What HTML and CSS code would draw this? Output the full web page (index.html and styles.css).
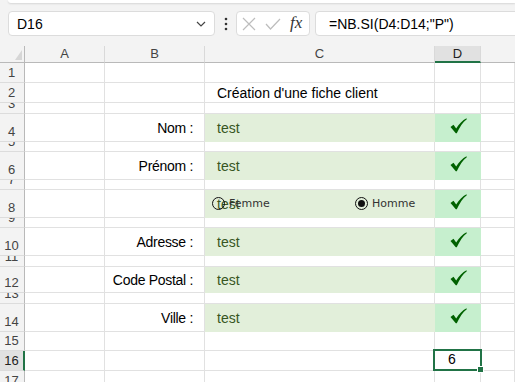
FILE: index.html
```html
<!DOCTYPE html>
<html>
  <head>
    <meta charset="utf-8">
    <title>Fiche client</title>
    <link rel="stylesheet" href="styles.css">
  </head>
  <body>
    <div class="top_edge"></div>

    <div class="formula_bar">
      <div class="name_box">
        <span>D16</span>
        <svg class="chevron" width="10" height="6" viewBox="0 0 10 6"><path d="M1 1 L5 5 L9 1" fill="none" stroke="#444" stroke-width="1.2"/></svg>
      </div>
      <svg class="dots" width="4" height="14" viewBox="0 0 4 14"><circle cx="2" cy="2" r="1.3" fill="#333"/><circle cx="2" cy="7" r="1.3" fill="#333"/><circle cx="2" cy="12" r="1.3" fill="#333"/></svg>
      <div class="fx_box">
        <svg width="14" height="14" viewBox="0 0 14 14"><path d="M1 1 L13 13 M13 1 L1 13" stroke="#bdbdbd" stroke-width="1.2"/></svg>
        <svg width="16" height="12" viewBox="0 0 16 12"><path d="M1 6 L5.5 11 L15 1" fill="none" stroke="#bdbdbd" stroke-width="1.2"/></svg>
        <span class="fx">fx</span>
      </div>
      <div class="formula">=NB.SI(D4:D14;"P")</div>
    </div>

    <div class="sheet">
      <!-- column headers -->
      <div class="corner"><div class="corner_tri"></div></div>
      <div class="ch">A</div><div class="ch">B</div><div class="ch">C</div><div class="ch ch_sel">D</div><div class="ch ch_last"></div>

      <div class="rh">1</div><div class="c"></div><div class="c"></div><div class="c"></div><div class="c"></div><div class="c"></div>
      <div class="rh">2</div><div class="c"></div><div class="c"></div><div class="c val">Création d'une fiche client</div><div class="c"></div><div class="c"></div>
      <div class="rh">3</div><div class="c"></div><div class="c"></div><div class="c"></div><div class="c"></div><div class="c"></div>

      <div class="rh">4</div><div class="c"></div><div class="c label">Nom :</div><div class="c field">test</div><div class="c ok"><svg class="check" width="17" height="16" viewBox="0 0 17 16"><path d="M0.5 9 L3.5 6.8 L6.2 10.6 C9 6 12.5 2.2 16.5 0.3 L16.8 1.2 C12.8 4.2 9.6 9 6.8 15.3 L5.8 15.3 Z" fill="#006100"/></svg></div><div class="c"></div>
      <div class="rh">5</div><div class="c"></div><div class="c"></div><div class="c"></div><div class="c"></div><div class="c"></div>

      <div class="rh">6</div><div class="c"></div><div class="c label">Prénom :</div><div class="c field">test</div><div class="c ok"><svg class="check" width="17" height="16" viewBox="0 0 17 16"><path d="M0.5 9 L3.5 6.8 L6.2 10.6 C9 6 12.5 2.2 16.5 0.3 L16.8 1.2 C12.8 4.2 9.6 9 6.8 15.3 L5.8 15.3 Z" fill="#006100"/></svg></div><div class="c"></div>
      <div class="rh">7</div><div class="c"></div><div class="c"></div><div class="c"></div><div class="c"></div><div class="c"></div>

      <div class="rh">8</div><div class="c"></div><div class="c"></div>
      <div class="c field radios">test
        <label class="radio femme"><span class="dot"></span>Femme</label>
        <label class="radio homme"><span class="dot dot_on"></span>Homme</label>
      </div>
      <div class="c ok"><svg class="check" width="17" height="16" viewBox="0 0 17 16"><path d="M0.5 9 L3.5 6.8 L6.2 10.6 C9 6 12.5 2.2 16.5 0.3 L16.8 1.2 C12.8 4.2 9.6 9 6.8 15.3 L5.8 15.3 Z" fill="#006100"/></svg></div><div class="c"></div>
      <div class="rh">9</div><div class="c"></div><div class="c"></div><div class="c"></div><div class="c"></div><div class="c"></div>

      <div class="rh">10</div><div class="c"></div><div class="c label">Adresse :</div><div class="c field">test</div><div class="c ok"><svg class="check" width="17" height="16" viewBox="0 0 17 16"><path d="M0.5 9 L3.5 6.8 L6.2 10.6 C9 6 12.5 2.2 16.5 0.3 L16.8 1.2 C12.8 4.2 9.6 9 6.8 15.3 L5.8 15.3 Z" fill="#006100"/></svg></div><div class="c"></div>
      <div class="rh">11</div><div class="c"></div><div class="c"></div><div class="c"></div><div class="c"></div><div class="c"></div>

      <div class="rh">12</div><div class="c"></div><div class="c label">Code Postal :</div><div class="c field">test</div><div class="c ok"><svg class="check" width="17" height="16" viewBox="0 0 17 16"><path d="M0.5 9 L3.5 6.8 L6.2 10.6 C9 6 12.5 2.2 16.5 0.3 L16.8 1.2 C12.8 4.2 9.6 9 6.8 15.3 L5.8 15.3 Z" fill="#006100"/></svg></div><div class="c"></div>
      <div class="rh">13</div><div class="c"></div><div class="c"></div><div class="c"></div><div class="c"></div><div class="c"></div>

      <div class="rh">14</div><div class="c"></div><div class="c label">Ville :</div><div class="c field">test</div><div class="c ok"><svg class="check" width="17" height="16" viewBox="0 0 17 16"><path d="M0.5 9 L3.5 6.8 L6.2 10.6 C9 6 12.5 2.2 16.5 0.3 L16.8 1.2 C12.8 4.2 9.6 9 6.8 15.3 L5.8 15.3 Z" fill="#006100"/></svg></div><div class="c"></div>
      <div class="rh">15</div><div class="c"></div><div class="c"></div><div class="c"></div><div class="c"></div><div class="c"></div>

      <div class="rh rh_sel">16</div><div class="c"></div><div class="c"></div><div class="c"></div><div class="c total"><span>6</span><div class="selection"><div class="handle"></div></div></div><div class="c"></div>
      <div class="rh">17</div><div class="c"></div><div class="c"></div><div class="c"></div><div class="c"></div><div class="c"></div>
    </div>
  </body>
</html>
```

FILE: styles.css
```css
html, body{
  margin: 0;
  padding: 0;
}
body{
  width: 515px;
  height: 382px;
  overflow: hidden;
  background: #f3f3f3;
  font-family: "Liberation Sans", Arial, sans-serif;
  color: #000;
}

/* ribbon bottom + formula bar */
.top_edge{
  height: 3px;
  margin-left: 8px;
  background: #fff;
  border-bottom-left-radius: 6px;
  box-shadow: 0 1px 2px rgba(0,0,0,0.12);
}
.formula_bar{
  display: flex;
  align-items: center;
  height: 25px;
  margin-top: 8px;
  margin-bottom: 10px;
  padding-left: 8px;
}
.name_box{
  box-sizing: border-box;
  width: 207px;
  height: 25px;
  display: flex;
  align-items: center;
  justify-content: space-between;
  padding: 0 8px 0 8px;
  background: #fff;
  border: 1px solid #dcdcdc;
  border-radius: 4px;
  font-size: 14px;
}
.chevron{
  margin-top: 1px;
}
.dots{
  margin: 0 8px 0 9px;
}
.fx_box{
  box-sizing: border-box;
  width: 74px;
  height: 25px;
  display: flex;
  align-items: center;
  gap: 9px;
  padding-left: 5px;
  background: #fff;
  border: 1px solid #dcdcdc;
  border-radius: 4px;
}
.fx{
  font-family: "Liberation Serif", "Times New Roman", serif;
  font-style: italic;
  font-size: 17px;
  color: #333;
  margin-top: -2px;
}
.formula{
  box-sizing: border-box;
  flex: 1;
  height: 25px;
  margin-left: 5px;
  margin-right: -10px;
  padding-left: 13px;
  display: flex;
  align-items: center;
  background: #fff;
  border: 1px solid #dcdcdc;
  border-radius: 4px;
  font-size: 14px;
}

/* sheet grid */
.sheet{
  display: grid;
  grid-template-columns: 25px 80px 100px 230px 46px 1fr;
  grid-template-rows: 17px 20px 20px 11px 28px 10px 28px 10px 28px 10px 28px 11px 26px 11px 28px 19px 20px 20px;
  background: #fff;
  font-size: 14px;
}
.sheet > div{
  box-sizing: border-box;
  overflow: hidden;
}
.corner{
  background: #f3f3f3;
  border-right: 1px solid #b9b9b9;
  border-bottom: 1px solid #b9b9b9;
  position: relative;
}
.corner_tri{
  position: absolute;
  right: 2px;
  bottom: 2px;
  width: 0;
  height: 0;
  border-left: 7px solid transparent;
  border-bottom: 10px solid #d6d6d6;
}
.ch{
  background: #f3f3f3;
  border-right: 1px solid #d9d9d9;
  border-bottom: 1px solid #b9b9b9;
  text-align: center;
  font-size: 13px;
  line-height: 16px;
  color: #444;
}
.ch_sel{
  background: #e1e1e1;
  border-bottom: 2px solid #217346;
  color: #222;
}
.ch_last{
  border-right: none;
}
.rh{
  background: #f3f3f3;
  border-right: 1px solid #b9b9b9;
  border-bottom: 1px solid #dcdcdc;
  display: flex;
  align-items: flex-end;
  justify-content: center;
  padding-bottom: 3px;
  padding-right: 1px;
  font-size: 13px;
  line-height: 13px;
  color: #444;
}
.rh_sel{
  background: #e1e1e1;
  border-right: 2px solid #217346;
  padding-right: 0;
  color: #222;
}
.c{
  border-right: 1px solid #e1e1e1;
  border-bottom: 1px solid #e1e1e1;
  display: flex;
  align-items: center;
}
.val{
  padding-left: 12px;
}
.label{
  justify-content: flex-end;
  padding-right: 11px;
  letter-spacing: -0.3px;
}
.field{
  background: #e2efda;
  border-color: #e2efda;
  padding-left: 12px;
  color: #375623;
}
.ok{
  background: #c6efce;
  border-color: #c6efce;
  justify-content: center;
}
.check{
  margin-bottom: 3px;
  margin-left: 1px;
}

/* option buttons drawn over C8 */
.radios{
  position: relative;
}
.radio{
  position: absolute;
  top: 7px;
  display: flex;
  align-items: center;
  font-family: "DejaVu Sans", Tahoma, sans-serif;
  font-size: 11px;
  color: #333;
}
.femme{
  left: 7px;
}
.homme{
  left: 150px;
}
.dot{
  box-sizing: border-box;
  width: 13px;
  height: 13px;
  margin-right: 4px;
  border: 1px solid #111;
  border-radius: 50%;
  position: relative;
}
.dot_on::after{
  content: "";
  position: absolute;
  left: 2px;
  top: 2px;
  width: 7px;
  height: 7px;
  border-radius: 50%;
  background: #111;
}

/* active cell */
.sheet > .total{
  overflow: visible;
  position: relative;
  align-items: flex-end;
  padding-left: 13px;
  padding-bottom: 3px;
}
.selection{
  position: absolute;
  left: -2px;
  top: -2px;
  right: -2px;
  bottom: -1px;
  border: 2px solid #217346;
}
.handle{
  position: absolute;
  right: -4px;
  bottom: -4px;
  width: 5px;
  height: 5px;
  background: #217346;
  border: 1px solid #fff;
}
```
